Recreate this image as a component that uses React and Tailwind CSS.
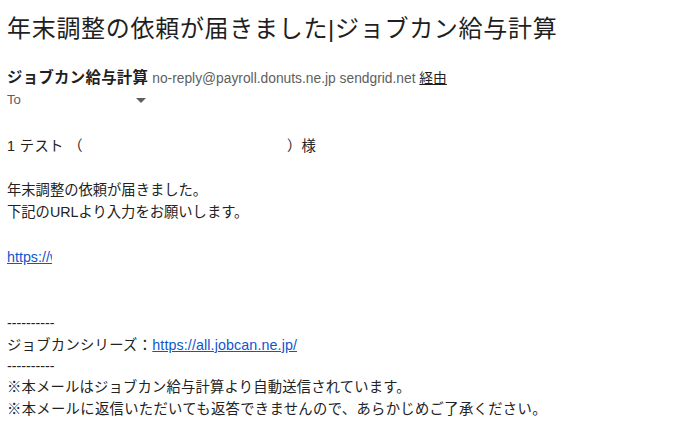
export default function App() {
  const font = { fontFamily: '"Liberation Sans", Arial, "Noto Sans CJK JP", sans-serif' };
  return (
    <div className="w-[675px] h-[438px] bg-white overflow-hidden text-[#222]" style={font}>
      {/* SUBJECT */}
      <h1 className="pl-[7px] pt-[13px] text-[24px] leading-[32px] text-[#1f1f1f] tracking-[0.7px] whitespace-nowrap">
        年末調整の依頼が届きました|ジョブカン給与計算
      </h1>

      {/* SENDER */}
      <div className="pl-[7px] mt-[23px] flex items-baseline gap-[4px] text-[15.4px] leading-[20px] whitespace-nowrap">
        <span className="font-bold text-[#1f1f1f] tracking-[0.3px]">ジョブカン給与計算</span>
        <span className="text-[13.8px] text-[#5e5e5e]">
          no-reply@payroll.donuts.ne.jp sendgrid.net <span className="underline text-[#1f1f1f]">経由</span>
        </span>
      </div>
      <div className="pl-[7px] flex items-center text-[13.2px] leading-[18px] text-[#5e5e5e] mt-[2px]">
        <span className="w-[129px]">To</span>
        <svg width="10" height="6" viewBox="0 0 10 6" className="mt-[1px]">
          <path d="M0 0 L10 0 L5 5 Z" fill="#5e5e5e" />
        </svg>
      </div>

      {/* BODY */}
      <div className="pl-[7px] mt-[26px] text-[14.3px] leading-[22px] text-[#222] whitespace-nowrap">
        <p className="flex">
          <span className="tracking-[0.4px]">1 テスト （</span>
          <span className="w-[204px]" />
          <span className="tracking-[0.4px]">）様</span>
        </p>
        <p className="mt-[22px]">年末調整の依頼が届きました。</p>
        <p>下記のURLより入力をお願いします。</p>
        <p className="mt-[23px] w-[45px] overflow-hidden">
          <a className="text-[#1155cc] underline">https://www</a>
        </p>
        <p className="mt-[44px]">----------</p>
        <p>
          <span className="tracking-[0.3px]">ジョブカンシリーズ：</span>
          <a className="text-[#1155cc] underline tracking-[0.1px]">https://all.jobcan.ne.jp/</a>
        </p>
        <p className="leading-[21px]">----------</p>
        <p className="leading-[21px] tracking-[0.2px]">※本メールはジョブカン給与計算より自動送信されています。</p>
        <p className="tracking-[0.35px]">※本メールに返信いただいても返答できませんので、あらかじめご了承ください。</p>
      </div>
    </div>
  );
}
